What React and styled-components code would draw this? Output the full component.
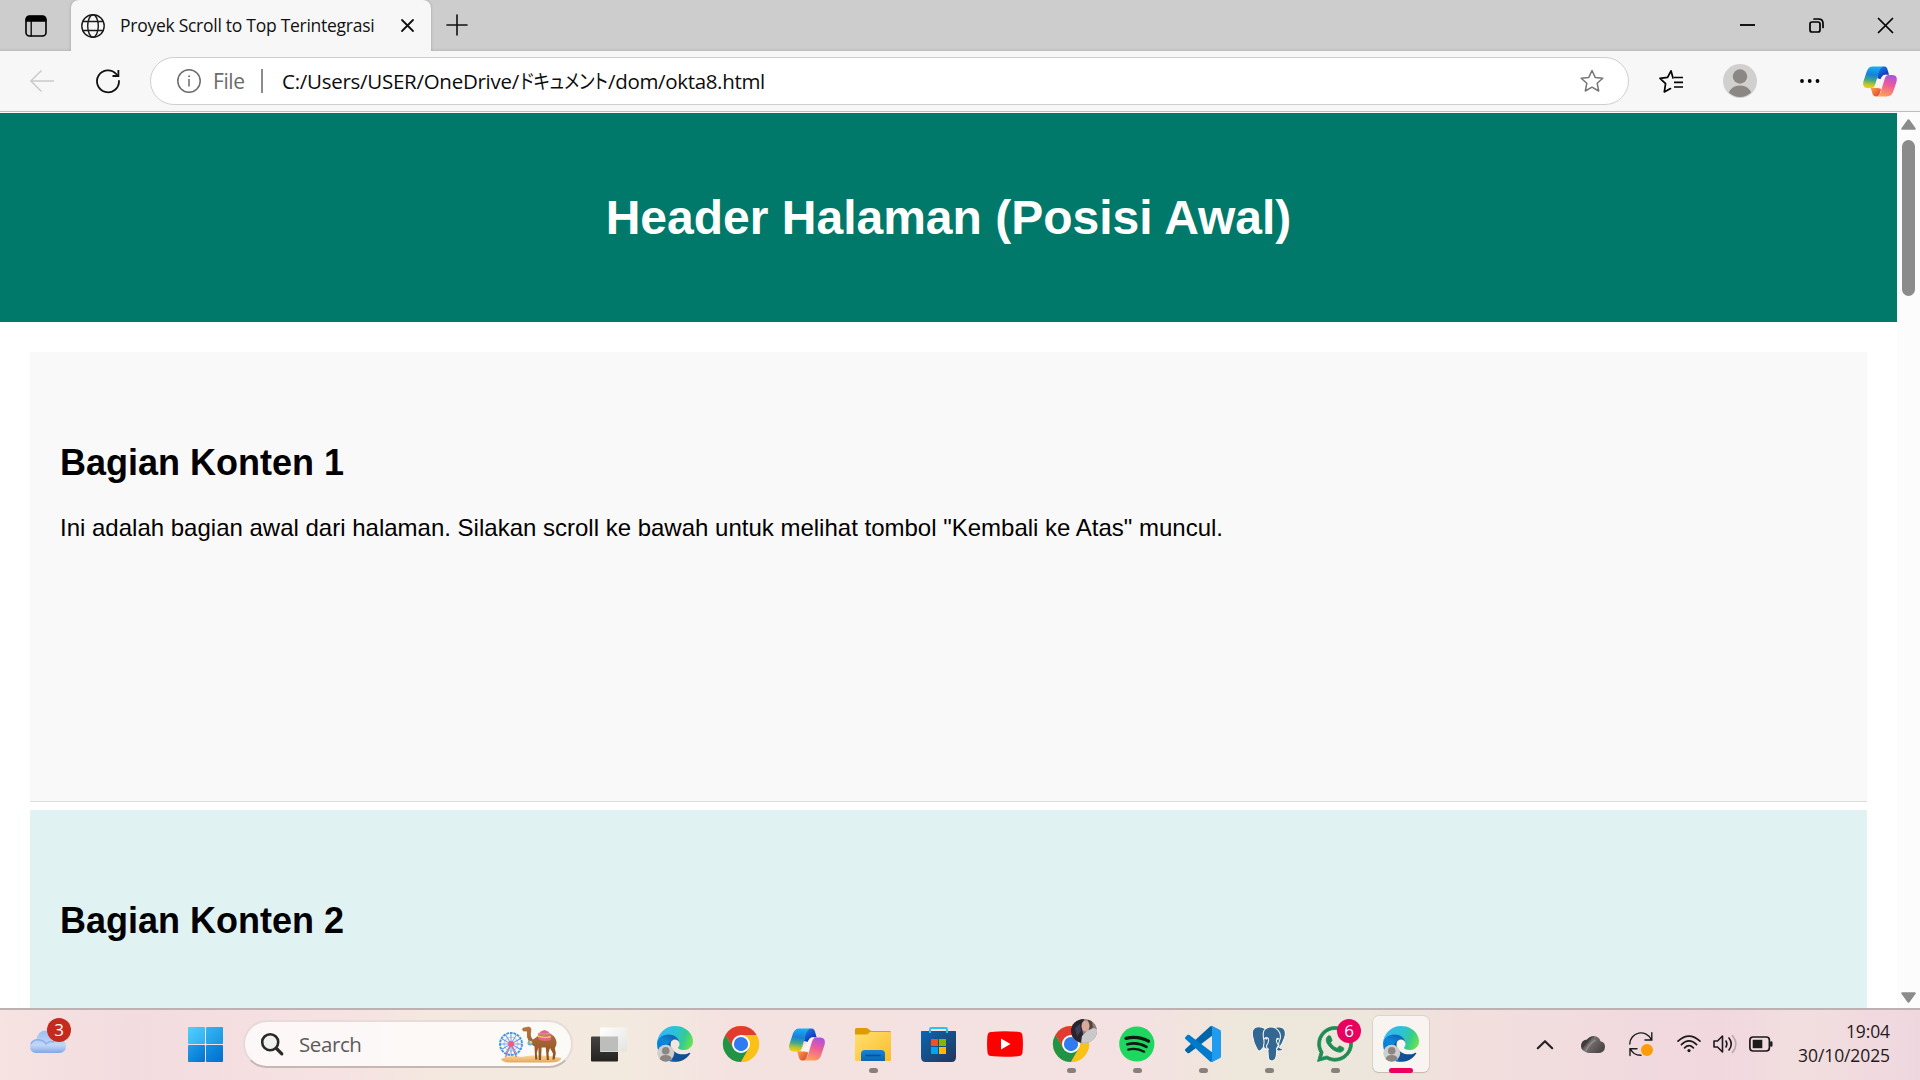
import React from "react";
import styled, { createGlobalStyle } from "styled-components";
import { FaWhatsapp } from "react-icons/fa";

const GlobalStyle = createGlobalStyle`
  * { box-sizing: border-box; }
  body { margin: 0; background: #fff; overflow: hidden; }
  svg { display: block; flex: none; overflow: visible; }
`;

const uiFont = `"Segoe UI", "Open Sans", "Noto Sans", "Noto Sans CJK JP", sans-serif`;

const Screen = styled.div`
  display: flex;
  flex-direction: column;
  width: 1920px;
  height: 1080px;
  overflow: hidden;
  font-family: ${uiFont};
`;

/* ---------- browser chrome ---------- */

const TabStrip = styled.div`
  display: flex;
  height: 51px;
  flex: none;
  background: linear-gradient(#cdcdcd 0 48px, #c4c4c4 50px, #b9b9b9 51px);
`;

const WorkspaceCell = styled.div`
  display: flex;
  width: 71px;
  padding: 15px 0 0 25px;
`;

const Tab = styled.div`
  position: relative;
  display: flex;
  align-items: center;
  width: 360px;
  height: 51px;
  padding: 0 17px 0 10px;
  background: #f7f7f7;
  border-radius: 8px 8px 0 0;
  box-shadow: 0 0 3px rgba(0, 0, 0, 0.22);
  clip-path: inset(0 -4px 0 -4px);
`;

const TabTitle = styled.div`
  width: 296px;
  padding: 0 0 2px 15px;
  font-size: 17.5px;
  line-height: 24px;
  letter-spacing: ${(p) => p.$track}px;
  white-space: nowrap;
  color: #111;
`;

const NewTab = styled.div`
  display: flex;
  padding: 15px 0 0 16px;
`;

const WindowControls = styled.div`
  display: flex;
  align-items: center;
  gap: 54px;
  height: 51px;
  margin-left: auto;
  padding-right: 27px;
`;

const Toolbar = styled.div`
  display: flex;
  align-items: center;
  flex: none;
  height: 60px;
  padding-left: 29px;
  background: #f7f7f7;
`;

const NavButtons = styled.div`
  display: flex;
  align-items: center;
  width: 121px;
  gap: 41px;
`;

const AddressBar = styled.div`
  display: flex;
  align-items: center;
  width: 1479px;
  height: 48px;
  padding: 0 24px 0 26px;
  border: 1px solid #cfcfcf;
  border-radius: 24px;
  background: #fff;
`;

const Scheme = styled.span`
  width: 48px;
  margin-left: 12px;
  font-size: 21px;
  letter-spacing: -0.4px;
  color: #6b6b6b;
`;

const Separator = styled.span`
  width: 2px;
  height: 24px;
  margin-right: 19px;
  background: #8c8c8c;
`;

const Url = styled.div`
  display: flex;
  flex: 1;
  font-size: 20.5px;
  line-height: 30px;
  white-space: nowrap;
  color: #0c0c0c;
`;

const UrlPart = styled.span`
  width: ${(p) => p.$w}px;
  letter-spacing: ${(p) => p.$track}px;
`;

const UrlKana = styled.span`
  width: 88px;
  font-family: "Noto Sans CJK JP", sans-serif;
  font-size: 20px;
  font-weight: 400;
  font-feature-settings: "palt";
  transform: scaleX(0.86);
  transform-origin: 0 50%;
`;

const ToolbarActions = styled.div`
  display: flex;
  align-items: center;
  flex: 1;
  padding-left: 30px;
`;

const Action = styled.div`
  margin-right: ${(p) => p.$gap}px;
`;

const ToolbarEdge = styled.div`
  flex: none;
  height: 2px;
  border-top: 1px solid #bdbdbd;
  background: #fbfbfb;
`;

/* ---------- page ---------- */

const Viewport = styled.div`
  display: flex;
  flex: none;
  height: 895px;
  overflow: hidden;
`;

const Page = styled.main`
  width: 1897px;
  height: 895px;
  overflow: hidden;
  font-family: Arial, "Liberation Sans", sans-serif;
  font-size: 24px;
  color: #000;
`;

const PageHeader = styled.header`
  height: 209px;
  padding: 45px;
  background: #00796b;
  color: #fff;
  text-align: center;

  h1 {
    margin: 32px 0;
    font-size: 48px;
    line-height: 55px;
  }
`;

const Content = styled.div`
  display: flex;
  flex-direction: column;
  gap: 8px;
  padding: 30px;
`;

const Section = styled.section`
  flex: none;
  height: 450px;
  padding: 60px 30px;
  background: ${(p) => p.$bg};
  border-bottom: 1px solid #ddd;

  h2 {
    margin: 30px 0 31px;
    font-size: 36px;
    line-height: 41px;
  }
  p {
    margin: 0;
    line-height: 27px;
  }
`;

const Scrollbar = styled.div`
  display: flex;
  flex-direction: column;
  align-items: center;
  width: 23px;
  padding: 6px 0 5px;
  background: #fcfcfc;
`;

const Thumb = styled.div`
  width: 13px;
  height: 156px;
  margin: 10px 0 auto;
  border-radius: 7px;
  background: #8b8b8b;
`;

/* ---------- taskbar ---------- */

const TaskbarRoot = styled.div`
  display: flex;
  flex: none;
  height: 72px;
  border-top: 2px solid #bfb1b1;
  background: linear-gradient(
    90deg,
    #f7e3e2 0,
    #f2dcdf 130px,
    #f6e1e3 330px,
    #f4e8df 430px,
    #f3eadf 620px,
    #f4e2e1 730px,
    #f3e2e1 1150px,
    #eee7db 1240px,
    #ece6dc 1370px,
    #f2dfdd 1460px,
    #f1dbde 1600px,
    #f1d8df 1720px,
    #f2dedf 1800px,
    #efd7df 1920px
  );
`;

const Weather = styled.div`
  position: relative;
  width: 188px;
  padding: 20px 0 0 30px;
`;

const Badge = styled.span`
  position: absolute;
  left: ${(p) => p.$x}px;
  top: ${(p) => p.$y}px;
  width: 24px;
  height: 24px;
  border-radius: 50%;
  background: ${(p) => p.$bg};
  color: #fff;
  font-size: 17px;
  line-height: 24px;
  text-align: center;
`;

const StartButton = styled.div`
  display: grid;
  grid-template-columns: 17px 17px;
  grid-template-rows: 17px 17px;
  gap: 1px;
  width: 35px;
  margin: 17px 20px 0 0;
`;

const Pane = styled.i`
  background: ${(p) => p.$bg};
  border-radius: 1px;
`;

const SearchBox = styled.div`
  display: flex;
  align-items: center;
  width: 330px;
  height: 48px;
  margin: 10px 3px 0 0;
  padding: 0 9px 0 16px;
  border: 2px solid rgba(190, 165, 160, 0.35);
  border-bottom-color: #c5b8b3;
  border-radius: 24px;
  background: rgba(255, 255, 255, 0.75);
`;

const SearchLabel = styled.span`
  flex: 1;
  padding-left: 16px;
  font-size: 20.5px;
  letter-spacing: -0.4px;
  color: #5c5a59;
`;

const AppSlot = styled.div`
  position: relative;
  display: flex;
  flex-direction: column;
  align-items: center;
  width: 66px;
  padding-top: 6px;
`;

const AppTile = styled.div`
  position: relative;
  display: flex;
  align-items: center;
  justify-content: center;
  width: 56px;
  height: 56px;
  border-radius: 6px;
  background: ${(p) => (p.$active ? "rgba(255,255,255,.6)" : "transparent")};
  box-shadow: ${(p) => (p.$active ? "0 0 0 1px rgba(160,140,130,.18), 0 1px 1px rgba(120,100,90,.25)" : "none")};
`;

const Indicator = styled.div`
  position: absolute;
  top: 58px;
  width: ${(p) => (p.$active ? 24 : 9)}px;
  height: 5px;
  border-radius: 3px;
  background: ${(p) => (p.$active ? "#eb0060" : "#88807c")};
`;

const Tray = styled.div`
  display: flex;
  align-items: center;
  margin-left: auto;
  height: 68px;
`;

const TrayItem = styled.div`
  display: flex;
  align-items: center;
  justify-content: center;
  width: 24px;
  height: 24px;
  margin-right: ${(p) => p.$gap}px;
`;

const Clock = styled.div`
  width: 105px;
  padding-bottom: 2px;
  margin-right: 30px;
  font-size: 17.5px;
  line-height: 24px;
  letter-spacing: ${(p) => p.$track}px;
  text-align: right;
  white-space: nowrap;
  color: #1e1b1c;
`;

/* ---------- icons ---------- */

const Line = ({ w = 24, h = w, color = "#1a1a1a", sw = 1.5, children }) => (
  <svg width={w} height={h} viewBox={`0 0 ${w} ${h}`} fill="none" stroke={color} strokeWidth={sw} strokeLinecap="round" strokeLinejoin="round">
    {children}
  </svg>
);

const EdgeIcon = ({ id }) => (
  <svg width="36" height="36" viewBox="0 0 256 256">
    <defs>
      <linearGradient id={`${id}a`} x1="58" y1="177" x2="237" y2="177" gradientUnits="userSpaceOnUse">
        <stop stopColor="#0c59a4" />
        <stop offset="1" stopColor="#114a8b" />
      </linearGradient>
      <linearGradient id={`${id}b`} x1="140" y1="70" x2="50" y2="230" gradientUnits="userSpaceOnUse">
        <stop stopColor="#0f5fae" />
        <stop offset=".4" stopColor="#0f86d8" />
        <stop offset="1" stopColor="#0078d4" />
      </linearGradient>
      <linearGradient id={`${id}c`} x1="10" y1="50" x2="240" y2="140" gradientUnits="userSpaceOnUse">
        <stop stopColor="#35b8f1" />
        <stop offset=".45" stopColor="#2bc2d8" />
        <stop offset=".75" stopColor="#36cb92" />
        <stop offset="1" stopColor="#66e44b" />
      </linearGradient>
    </defs>
    <path fill={`url(#${id}a)`} d="M231.07 190.54c-3.42 1.78-6.93 3.36-10.54 4.72a101.63 101.63 0 0 1-35.91 6.46c-47.31 0-88.53-32.54-88.53-74.31a31.44 31.44 0 0 1 16.43-27.31c-42.8 1.8-53.8 46.4-53.8 72.53 0 73.88 68.09 81.37 82.76 81.37 7.91 0 19.84-2.3 27-4.56l1.31-.44a128.34 128.34 0 0 0 66.6-52.8 4 4 0 0 0-5.32-5.66z" />
    <path fill={`url(#${id}b)`} d="M105.73 241.42a79.2 79.2 0 0 1-22.74-21.34 80.72 80.72 0 0 1 29.53-120c3.12-1.47 8.45-4.13 15.54-4a32.35 32.35 0 0 1 25.69 13 31.9 31.9 0 0 1 6.36 18.66c0-.21 24.46-79.6-80-79.6-43.9 0-80 41.66-80 78.21a130.15 130.15 0 0 0 12.11 56 128 128 0 0 0 156.38 67.11 75.55 75.55 0 0 1-62.78-8z" />
    <path fill={`url(#${id}c)`} d="M152.33 148.86c-.81 1.05-3.3 2.5-3.3 5.66 0 2.61 1.7 5.12 4.72 7.23 14.38 10 41.49 8.68 41.56 8.68a59.56 59.56 0 0 0 30.27-8.35 61.38 61.38 0 0 0 30.43-52.88c.26-22.41-8-37.31-11.34-43.91C223.46 23.84 177.72 0 128 0A128 128 0 0 0 0 126.2c.48-36.54 36.8-66.05 80-66.05 3.5 0 23.46.34 42 10.07 16.34 8.58 24.9 18.94 30.85 29.21 6.18 10.67 7.28 24.15 7.28 29.52s-2.74 13.33-7.8 19.91z" />
    <g transform="translate(2 136)">
      <circle cx="60" cy="58" r="60" fill="#d0cecb" />
      <circle cx="60" cy="40" r="27" fill="#8b8683" />
      <path d="M17 98 Q22 71 60 71 Q98 71 103 98 Q84 118 60 118 Q36 118 17 98Z" fill="#8b8683" />
    </g>
  </svg>
);

const ChromeIcon = () => (
  <svg width="36" height="36" viewBox="0 0 48 48">
    <circle cx="24" cy="24" r="24" fill="#fbbf0c" />
    <path d="M3.2 12 A24 24 0 0 1 44.8 12 H24 L14 30Z" fill="#e23b30" />
    <path d="M3.2 12 A24 24 0 0 0 24 48 L34.4 30 H14Z" fill="#219347" />
    <path d="M24 12 H44.8 A24 24 0 0 1 24 48 L34.4 30Z" fill="#fbc116" />
    <circle cx="24" cy="24" r="12" fill="#fff" />
    <circle cx="24" cy="24" r="9.5" fill="#2f7bf0" />
  </svg>
);

const CopilotIcon = ({ id, w = 36, h = 33 }) => (
  <svg width={w} height={h} viewBox="0 0 36 33">
    <defs>
      <linearGradient id={`${id}a`} x1="10" y1="0" x2="7" y2="23" gradientUnits="userSpaceOnUse">
        <stop stopColor="#19b0f2" />
        <stop offset=".4" stopColor="#1680dc" />
        <stop offset=".65" stopColor="#3fa88a" />
        <stop offset=".85" stopColor="#b5c433" />
        <stop offset="1" stopColor="#f2cb12" />
      </linearGradient>
      <linearGradient id={`${id}b`} x1="19" y1="1" x2="25" y2="10" gradientUnits="userSpaceOnUse">
        <stop stopColor="#1a77df" />
        <stop offset="1" stopColor="#1434bd" />
      </linearGradient>
      <linearGradient id={`${id}c`} x1="31" y1="9" x2="23" y2="33" gradientUnits="userSpaceOnUse">
        <stop stopColor="#a452e6" />
        <stop offset=".45" stopColor="#ec5a9c" />
        <stop offset="1" stopColor="#ffa155" />
      </linearGradient>
      <linearGradient id={`${id}d`} x1="9" y1="24" x2="17" y2="32" gradientUnits="userSpaceOnUse">
        <stop stopColor="#fd9a3e" />
        <stop offset="1" stopColor="#df4a35" />
      </linearGradient>
    </defs>
    <path fill={`url(#${id}b)`} d="M16 7 C17.5 2 19 .5 22.5 .5 C25 .5 25.6 2 26.4 5 L27.6 9.3 H24 C21 9.3 20 11 19 14 L15 13Z" />
    <path fill={`url(#${id}d)`} d="M8 23.2 H12.5 C15 23 16 21 17 18 L21 19 L18.5 27 C17.2 31 16.5 32.5 13.8 32.5 C10.8 32.5 10.2 30.5 9.4 27.5Z" />
    <path fill="#fbf3f3" d="M20.5 11 Q21.6 9.4 24 9.4 H25 L19.5 25 Q18.5 23.6 15.5 23.4 L12 23.4Z" />
    <path fill={`url(#${id}a)`} d="M11 .5 H22 C19 .8 18 3 17 6 L13.2 18.7 C12.2 22 11 23.5 8 23.5 H5 C.8 23.5 -.8 20.5 .5 16 L3.8 6 C5 2.5 7 .5 11 .5Z" />
    <path fill={`url(#${id}c)`} d="M27.5 9.5 H31 C35.2 9.5 36.8 12.5 35.5 17 L32.2 27 C31 30.7 29 32.5 25 32.5 H14 C17 32.2 18 30 19 27 L22.8 14.3 C23.8 11 25 9.5 27.5 9.5Z" />
  </svg>
);

const FolderIcon = () => (
  <svg width="36" height="33" viewBox="0 0 36 33">
    <defs>
      <linearGradient id="folder" x1="0" y1="0" x2="1" y2="1">
        <stop stopColor="#ffdf72" />
        <stop offset="1" stopColor="#fbbd27" />
      </linearGradient>
      <linearGradient id="folderTab" x1="0" y1="0" x2="0" y2="1">
        <stop stopColor="#1583d8" />
        <stop offset="1" stopColor="#0b66b4" />
      </linearGradient>
    </defs>
    <path d="M0 1.5 Q0 0 1.5 0 H11 Q12.5 0 13.5 1 L16 3 H35 Q36 3 36 5 V12 H0Z" fill="#dd9c05" />
    <path d="M0 6.5 H11 Q12.5 6.5 13.5 5.5 L15 4 H35 Q36 4 36 5 V31.5 Q36 33 34.5 33 H1.5 Q0 33 0 31.5Z" fill="url(#folder)" />
    <path d="M6 33 V26 Q6 22 10 22 H26 Q30 22 30 26 V33Z" fill="url(#folderTab)" />
    <path d="M11 27.5 H25" stroke="#0a4d8c" strokeWidth="1.6" strokeLinecap="round" />
  </svg>
);

const StoreIcon = () => (
  <svg width="36" height="36" viewBox="0 0 36 36">
    <defs>
      <linearGradient id="store" x1="0" y1="0" x2="1" y2="1">
        <stop stopColor="#0a66b5" />
        <stop offset="1" stopColor="#243458" />
      </linearGradient>
    </defs>
    <path d="M0 5.5 Q0 5 .5 5 H34.5 Q35 5 35 5.5 V31 Q35 36 30.5 36 H4.5 Q0 36 0 31Z" fill="url(#store)" />
    <path d="M9 7 V3.2 Q9 2 10.2 2 H24.8 Q26 2 26 3.2 V7" fill="none" stroke="#2dc1f1" strokeWidth="2" />
    <rect x="10" y="13" width="7" height="7" fill="#f25022" />
    <rect x="18" y="13" width="7" height="7" fill="#7fba00" />
    <rect x="10" y="21" width="7" height="7" fill="#00a4ef" />
    <rect x="18" y="21" width="7" height="7" fill="#ffb900" />
  </svg>
);

const YoutubeIcon = () => (
  <svg width="36" height="26" viewBox="0 0 36 26">
    <path d="M4 .9 Q18 -.6 32 .9 Q35.2 1.2 35.5 4.5 Q36.4 13 35.5 21.5 Q35.2 24.8 32 25.1 Q18 26.6 4 25.1 Q.8 24.8 .5 21.5 Q-.4 13 .5 4.5 Q.8 1.2 4 .9Z" fill="#f00" />
    <path d="M14 7.5 L23.5 13 L14 18.5Z" fill="#fff" />
  </svg>
);

const SpotifyIcon = () => (
  <svg width="36" height="36" viewBox="0 0 36 36" fill="none" stroke="#0c1a10" strokeLinecap="round">
    <circle cx="17.8" cy="18" r="17.6" fill="#1ed760" stroke="none" />
    <path d="M7 12.4 Q19 9.4 29.5 15.2" strokeWidth="3.2" />
    <path d="M8.3 18.2 Q18.5 15.6 27.5 20.8" strokeWidth="2.6" />
    <path d="M9.2 23.6 Q17.8 21.6 25.2 25.8" strokeWidth="2.2" />
  </svg>
);

const CodeIcon = () => (
  <svg width="36" height="36" viewBox="0 0 100 100">
    <path fill="#0065a9" d="M96.46 10.8L75.86.88C73.47-.27 70.62.21 68.75 2.08L1.3 63.58c-1.82 1.66-1.82 4.51 0 6.17l5.51 5c1.49 1.35 3.72 1.45 5.32.24L93.36 13.37C96.09 11.3 100 13.25 100 16.67v-.24c0-2.4-1.38-4.59-3.54-5.63z" />
    <path fill="#007acc" d="M96.46 89.2L75.86 99.12c-2.39 1.15-5.24.67-7.11-1.2L1.3 36.42c-1.82-1.66-1.82-4.51 0-6.17l5.51-5c1.49-1.35 3.72-1.45 5.32-.24l81.23 61.62c2.73 2.07 6.64.12 6.64-3.3v.24c0 2.4-1.38 4.59-3.54 5.63z" />
    <path fill="#1f9cf0" d="M75.86 99.13c-2.39 1.15-5.24.66-7.11-1.21 2.31 2.31 6.25.67 6.25-2.59V4.67c0-3.26-3.94-4.89-6.25-2.59 1.87-1.87 4.72-2.36 7.11-1.21l20.6 9.91c2.16 1.04 3.54 3.23 3.54 5.63v67.18c0 2.4-1.38 4.59-3.54 5.63z" />
  </svg>
);

const ElephantIcon = () => (
  <svg width="36" height="36" viewBox="0 0 36 36" fill="#336791" stroke="#f4f3ef" strokeWidth="1.1" strokeLinejoin="round" strokeLinecap="round">
    <path d="M22 2 Q28 -.3 32 2 Q36 5 33.5 12 Q31.5 18 28.5 21.5 Q29.5 23 32.5 22.6 Q31.5 25 27.5 25 L24 24Z" />
    <path d="M15 3 Q9 -.3 4.5 1.2 Q.3 3.5 1.5 10 Q2.7 17.5 6 23 Q8 26.6 10.3 23.8 L12.6 21 Q14 23.6 16 23.2Z" />
    <path d="M12.7 5 Q15.5 .8 20 1 Q25.5 1 28.6 6.5 Q30.5 11 28.3 15 Q27.8 20 25.6 22.5 Q26 30 24.2 33.2 Q22 36 19 34.6 Q17.3 33.5 17.2 29 L16.8 23.5 Q12.5 22.8 12.5 20 Q13.5 16.5 12.7 13 Q11.7 8.5 12.7 5Z" />
    <path d="M12.8 13 Q15.3 10.5 17.3 12.4 Q18.3 16 15.6 19.4 Q15 22 17.4 23.3 M28.2 13 Q25.7 12.5 25.3 15 Q26 18 28 19.5 Q27 22 25.4 22.8" fill="none" />
    <circle cx="15.3" cy="12.6" r=".5" fill="#fff" />
    <circle cx="26.3" cy="12.6" r=".4" fill="#fff" />
  </svg>
);

const TaskViewIcon = () => (
  <svg width="36" height="35" viewBox="0 0 36 35">
    <defs>
      <linearGradient id="tvDark" x1="0" y1="0" x2="0" y2="1">
        <stop stopColor="#454341" />
        <stop offset="1" stopColor="#232221" />
      </linearGradient>
      <linearGradient id="tvLight" x1="0" y1="0" x2="1" y2="1">
        <stop stopColor="#fff" />
        <stop offset="1" stopColor="#e4e3e2" />
      </linearGradient>
    </defs>
    <rect x="0" y="9.5" width="27" height="25" rx="1" fill="url(#tvDark)" />
    <rect x="9" y=".5" width="27" height="24.5" rx="1" fill="url(#tvLight)" />
    <rect x="9" y="9.5" width="18" height="15" fill="#bdbdbc" />
  </svg>
);

const PhotoAvatar = styled.svg`
  position: absolute;
  left: 33px;
  top: 9px;
`;

const ProfilePhoto = () => (
  <PhotoAvatar width="26" height="24" viewBox="0 0 26 24">
    <defs>
      <clipPath id="photoClip">
        <ellipse cx="13" cy="12" rx="13" ry="12" />
      </clipPath>
    </defs>
    <g clipPath="url(#photoClip)">
      <rect width="26" height="24" fill="#8a7a78" />
      <path d="M0 0 H13 L11 10 L14 24 H0Z" fill="#282530" />
      <path d="M17 0 H21 L22 12 L18 11Z" fill="#54443f" />
      <ellipse cx="14.5" cy="7" rx="4" ry="5.5" fill="#d9aa99" />
      <path d="M11 17 L16 12 L22 9 L26 10 V24 H10Z" fill="#c9c8ca" />
      <path d="M4 9 L9 5 L10 12 L6 17Z" fill="#3a4058" />
    </g>
  </PhotoAvatar>
);

const DesertArt = () => (
  <svg width="63" height="37" viewBox="0 0 63 37">
    <defs>
      <linearGradient id="sand" x1="0" y1="0" x2="0" y2="1">
        <stop stopColor="#f9d796" />
        <stop offset="1" stopColor="#e3a75c" />
      </linearGradient>
      <linearGradient id="fur" x1="0" y1="0" x2="0" y2="1">
        <stop stopColor="#b8763d" />
        <stop offset="1" stopColor="#8b4f23" />
      </linearGradient>
    </defs>
    <path d="M2 33 Q10 28.5 22 31 Q40 27 62.5 32 Q62 36.5 50 36.5 H12 Q3 36.5 2 33Z" fill="url(#sand)" />
    <path d="M12 18.5 L6.5 31 M12 18.5 L17.5 31" stroke="#f06d86" strokeWidth="1.4" />
    <circle cx="12" cy="18" r="11" fill="none" stroke="#3f95ea" strokeWidth="1.9" strokeDasharray="2.8 .8" />
    <circle cx="12" cy="18" r="7" fill="none" stroke="#8dc2f5" strokeWidth=".8" />
    {[0, 30, 60, 90, 120, 150].map((a) => (
      <path key={a} d="M1.5 18 H22.5" stroke="#6a8fe0" strokeWidth=".9" transform={`rotate(${a} 12 18)`} />
    ))}
    <circle cx="12" cy="18" r="3" fill="#ee5f7f" />
    <path d="M23 3 Q24 .8 27 1.2 L29.5 .4 L31.5 1.6 Q33 3 32 6 Q31 11 34 13.5 Q37 12 41 8 Q45 1.5 49 7.5 Q55 8 57 14 Q58.5 18 55.8 22 L56.8 27 L55.6 33.5 H53.4 L54 27.5 L51 22 L49.5 27 L50 34 H47.8 L46.8 21.5 H42.6 L42 34 H39.8 L39.4 21.5 L37.8 27 L38.3 33.5 H36.2 L35.5 20.5 Q31.5 18.6 29.4 14.5 Q27.4 11 28 5.5 L24 5.2Z" fill="url(#fur)" />
    <path d="M39 8 Q42 4.5 45.5 4 Q49 4.5 51.5 8 L52 14 Q45 16.5 39 13Z" fill="#e2658b" />
    <path d="M39 10 Q45 12.5 52 10.5" stroke="#f3c64a" strokeWidth="1.5" fill="none" />
    <path d="M39 7.3 Q45 9 51.4 7.5" stroke="#a4c64d" strokeWidth="1" fill="none" />
    <circle cx="31" cy="17" r="2.5" fill="#65aedb" />
    <circle cx="31.7" cy="16.2" r="1.2" fill="#f4d34d" />
  </svg>
);

const WeatherIcon = () => (
  <svg width="36" height="23" viewBox="0 0 36 23">
    <defs>
      <linearGradient id="cloud" x1="0" y1="0" x2="0" y2="1">
        <stop stopColor="#9dbdf2" />
        <stop offset=".65" stopColor="#c3d6f7" />
        <stop offset="1" stopColor="#83a6e9" />
      </linearGradient>
    </defs>
    <path d="M6 23 Q0 22.5 0 16 Q0 10 6.5 9.5 Q8 .5 16 .5 Q24 .5 26.5 8.5 Q36 9 36 16 Q36 22.5 29 23Z" fill="url(#cloud)" />
    <path d="M1 14 Q3 9.5 8 9.8 Q14 10.2 16 14 Q19 10.5 24 12" fill="none" stroke="#7ea2e4" strokeWidth="1.4" opacity=".7" />
  </svg>
);

const STAR = "M12 1.5 L15.2 8.4 L22.8 9.2 L17.2 14.3 L18.7 22 L12 18.2 L5.3 22 L6.8 14.3 L1.2 9.2 L8.8 8.4 Z";

const apps = [
  { name: "task-view", icon: <TaskViewIcon /> },
  { name: "edge", icon: <EdgeIcon id="e1" /> },
  { name: "chrome", icon: <ChromeIcon /> },
  { name: "copilot", icon: <CopilotIcon id="c1" /> },
  { name: "explorer", icon: <FolderIcon />, open: true },
  { name: "store", icon: <StoreIcon /> },
  { name: "youtube", icon: <YoutubeIcon /> },
  { name: "chrome-profile", icon: <ChromeIcon />, extra: <ProfilePhoto />, open: true },
  { name: "spotify", icon: <SpotifyIcon />, open: true },
  { name: "code", icon: <CodeIcon />, open: true },
  { name: "postgres", icon: <ElephantIcon />, open: true },
  { name: "whatsapp", icon: <FaWhatsapp size={40} color="#1f8b55" strokeWidth={10} />, extra: <Badge $x={35} $y={9} $bg="#ea005e">6</Badge>, open: true },
  { name: "edge-active", icon: <EdgeIcon id="e2" />, open: true, active: true },
];

const BrowserTabs = () => (
  <TabStrip>
    <WorkspaceCell>
      <Line w={22} color="#000" sw={1.6}>
        <rect x="1" y="1" width="20" height="20" rx="3.5" />
        <path d="M1.5 5 Q1.5 1.5 5 1.5 H17 Q20.5 1.5 20.5 5 V6 H1.5Z" fill="#000" />
        <path d="M6.2 6 V21" strokeWidth="1.3" />
      </Line>
    </WorkspaceCell>
    <Tab>
      <Line sw={1.4}>
        <circle cx="12" cy="12" r="11.2" />
        <ellipse cx="12" cy="12" rx="5.3" ry="11.2" />
        <path d="M2 7.5 H22 M2 16.5 H22" />
      </Line>
      <TabTitle $track={-0.27}>Proyek Scroll to Top Terintegrasi</TabTitle>
      <Line w={13} color="#111" sw={1.8}>
        <path d="M1 1 L12 12 M12 1 L1 12" />
      </Line>
    </Tab>
    <NewTab>
      <Line w={20} color="#111" sw={1.6}>
        <path d="M10 0 V20 M0 10 H20" />
      </Line>
    </NewTab>
    <WindowControls>
      <Line w={15} color="#000" sw={1.8}>
        <path d="M0 7 H15" strokeLinecap="butt" />
      </Line>
      <Line w={15} color="#000" sw={1.7}>
        <rect x="1" y="4" width="10" height="10" rx="2" />
        <path d="M5 1 H9.5 Q14 1 14 5.5 V9.5" />
      </Line>
      <Line w={15} color="#000" sw={1.7}>
        <path d="M.5 .5 L14.5 14.5 M14.5 .5 L.5 14.5" />
      </Line>
    </WindowControls>
  </TabStrip>
);

const AddressRow = () => (
  <Toolbar>
    <NavButtons>
      <Line w={26} h={24} color="#cacaca" sw={1.5}>
        <path d="M12 2 L1.8 12 L12 22 M1.8 12 H24.5" />
      </Line>
      <Line color="#111" sw={1.8}>
        <path d="M23 12 A11 11 0 1 1 20.2 5 L22 7" />
        <path d="M22.4 1 V7 H16.5" strokeLinecap="butt" strokeLinejoin="miter" />
      </Line>
    </NavButtons>
    <AddressBar>
      <Line color="#6b6b6b" sw={1.5}>
        <circle cx="12" cy="12" r="11.2" />
        <path d="M12 10.5 V17" />
        <circle cx="12" cy="7.2" r=".5" fill="#6b6b6b" strokeWidth="1" />
      </Line>
      <Scheme>File</Scheme>
      <Separator />
      <Url>
        <UrlPart $w={238} $track={-0.27}>C:/Users/USER/OneDrive/</UrlPart>
        <UrlKana>ドキュメント</UrlKana>
        <UrlPart $w={160} $track={-0.33}>/dom/okta8.html</UrlPart>
      </Url>
      <Line color="#767676" sw={1.5}>
        <path d={STAR} />
      </Line>
    </AddressBar>
    <ToolbarActions>
      <Action $gap={40}>
        <Line color="#000" sw={1.7}>
          <path d="M14 9 L12 1.8 L8.6 8.4 L1 9.4 L6.6 14.6 L5.3 23 L11.5 19.6" />
          <path d="M15 8.5 H24 M15 13.3 H24 M15 18 H24" strokeLinecap="butt" />
        </Line>
      </Action>
      <Action $gap={43}>
        <svg width="34" height="34" viewBox="0 0 34 34">
          <defs>
            <clipPath id="avatarClip">
              <circle cx="17" cy="17" r="16" />
            </clipPath>
          </defs>
          <circle cx="17" cy="17" r="17" fill="#d2d0ce" />
          <circle cx="17" cy="12.5" r="7.2" fill="#8a8785" />
          <path clipPath="url(#avatarClip)" d="M5 30 Q8 21.5 17 21.5 Q26 21.5 29 30 Q24 34 17 34 Q10 34 5 30Z" fill="#8a8785" />
        </svg>
      </Action>
      <Action $gap={43}>
        <svg width="20" height="4" viewBox="0 0 20 4">
          <circle cx="2" cy="2" r="1.9" />
          <circle cx="9.7" cy="2" r="1.9" />
          <circle cx="17.5" cy="2" r="1.9" />
        </svg>
      </Action>
      <Action $gap={0}>
        <CopilotIcon id="c0" w={34} h={31} />
      </Action>
    </ToolbarActions>
  </Toolbar>
);

const SystemTray = () => (
  <Tray>
    <TrayItem $gap={24}>
      <Line w={16} h={9} sw={2.2} color="#252223">
        <path d="M.8 8.2 L8 1.2 L15.2 8.2" />
      </Line>
    </TrayItem>
    <TrayItem $gap={24}>
      <svg width="24" height="17" viewBox="0 0 24 17">
        <defs>
          <linearGradient id="drive" x1="0" y1="0" x2="1" y2=".6">
            <stop stopColor="#444" />
            <stop offset=".33" stopColor="#3d3b3b" />
            <stop offset=".45" stopColor="#777272" />
            <stop offset=".6" stopColor="#6b6565" />
            <stop offset="1" stopColor="#4c4646" />
          </linearGradient>
        </defs>
        <path d="M5 16 Q0 14.5 0 9.5 Q.5 4 6 3.5 Q8.5 0 13 0 Q18 .5 19.5 5.2 Q24 6 24 11 Q23.5 16.7 18 17 H8 Q6 17 5 16Z" fill="url(#drive)" />
        <path d="M5 15 Q8 8 14.5 4" stroke="#969090" strokeWidth="1.3" fill="none" />
      </svg>
    </TrayItem>
    <TrayItem $gap={24}>
      <Line sw={1.4} color="#1c1c1c">
        <path d="M.8 12 A11.2 11.2 0 0 1 22.2 7.5 M22.8 .8 V8 H16" strokeLinejoin="miter" />
        <path d="M1 23.5 V16.8 H8 M1.5 17 Q4.5 23.5 12 23.3" strokeLinejoin="miter" />
        <circle cx="18" cy="18" r="6" fill="#ff9a0b" stroke="none" />
      </Line>
    </TrayItem>
    <TrayItem $gap={12}>
      <Line h={18} sw={1.7} color="#1c1a1b">
        <path d="M1 6.2 Q12 -4 23 6.2 M4.4 9.6 Q12 2.2 19.6 9.6 M7.6 12.8 Q12 8.6 16.4 12.8" />
        <circle cx="12" cy="15.6" r="1.6" fill="#1c1a1b" stroke="none" />
      </Line>
    </TrayItem>
    <TrayItem $gap={12}>
      <Line h={20} sw={1.6} color="#1c1a1b">
        <path d="M1 7 H4.5 L9.5 2 V18 L4.5 13 H1Z" />
        <path d="M13 7 Q14.8 10 13 13 M16 4 Q20.5 10 16 16" />
        <path d="M19.4 1.5 Q26.4 10 19.4 18.5" stroke="#b9a9ae" />
      </Line>
    </TrayItem>
    <TrayItem $gap={12}>
      <Line h={16} sw={1.7} color="#1c1a1b">
        <rect x=".9" y="1" width="19.5" height="14" rx="3.2" />
        <rect x="3.7" y="3.8" width="9.6" height="8.4" fill="#1c1a1b" stroke="none" />
        <path d="M22.3 6.5 V9.5" strokeWidth="2.4" />
      </Line>
    </TrayItem>
    <Clock $track={-0.1}>
      19:04
      <br />
      30/10/2025
    </Clock>
  </Tray>
);

export default function App() {
  return (
    <Screen>
      <GlobalStyle />
      <BrowserTabs />
      <AddressRow />
      <ToolbarEdge />
      <Viewport>
        <Page>
          <PageHeader>
            <h1>Header Halaman (Posisi Awal)</h1>
          </PageHeader>
          <Content>
            <Section $bg="#f9f9f9">
              <h2>Bagian Konten 1</h2>
              <p>Ini adalah bagian awal dari halaman. Silakan scroll ke bawah untuk melihat tombol "Kembali ke Atas" muncul.</p>
            </Section>
            <Section $bg="#e0f2f1">
              <h2>Bagian Konten 2</h2>
            </Section>
          </Content>
        </Page>
        <Scrollbar>
          <svg width="15" height="11" viewBox="0 0 15 11">
            <path d="M7.5 1.2 L13.8 9.8 H1.2Z" fill="#8b8b8b" stroke="#8b8b8b" strokeWidth="2" strokeLinejoin="round" />
          </svg>
          <Thumb />
          <svg width="15" height="11" viewBox="0 0 15 11">
            <path d="M7.5 9.8 L13.8 1.2 H1.2Z" fill="#8b8b8b" stroke="#8b8b8b" strokeWidth="2" strokeLinejoin="round" />
          </svg>
        </Scrollbar>
      </Viewport>
      <TaskbarRoot>
        <Weather>
          <WeatherIcon />
          <Badge $x={47} $y={8} $bg="#c42b1c">3</Badge>
        </Weather>
        <StartButton>
          <Pane $bg="linear-gradient(135deg,#4fcfff,#2db0ee)" />
          <Pane $bg="linear-gradient(135deg,#35b5f2,#1795e3)" />
          <Pane $bg="linear-gradient(135deg,#1f9fe8,#0173d0)" />
          <Pane $bg="linear-gradient(135deg,#1390e2,#0170cf)" />
        </StartButton>
        <SearchBox>
          <Line w={22} sw={2.6} color="#2a2929">
            <circle cx="9.2" cy="9.2" r="8" fill="#f1f0f0" />
            <path d="M15.5 15.5 L20.8 20.8" strokeWidth="3.2" />
          </Line>
          <SearchLabel>Search</SearchLabel>
          <DesertArt />
        </SearchBox>
        {apps.map((app) => (
          <AppSlot key={app.name}>
            <AppTile $active={app.active}>{app.icon}</AppTile>
            {app.extra}
            {app.open && <Indicator $active={app.active} />}
          </AppSlot>
        ))}
        <SystemTray />
      </TaskbarRoot>
    </Screen>
  );
}
